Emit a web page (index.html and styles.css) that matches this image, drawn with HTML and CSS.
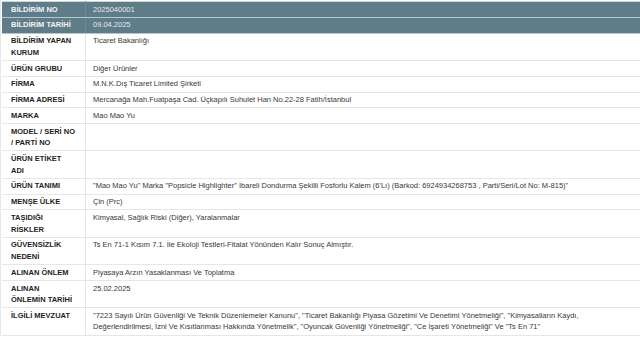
FILE: index.html
```html
<!DOCTYPE html>
<html lang="tr">
<head>
<meta charset="utf-8">
<title>Bildirim</title>
<link rel="stylesheet" href="styles.css">
</head>
<body>
<div class="frame">
<table class="info">
<tbody>
<tr class="head"><th>BİLDİRİM NO</th><td>2025040001</td></tr>
<tr class="head"><th>BİLDİRİM TARİHİ</th><td>09.04.2025</td></tr>
<tr><th>BİLDİRİM YAPAN KURUM</th><td>Ticaret Bakanlığı</td></tr>
<tr><th>ÜRÜN GRUBU</th><td>Diğer Ürünler</td></tr>
<tr><th>FİRMA</th><td>M.N.K.Dış Ticaret Limited Şirketi</td></tr>
<tr><th>FİRMA ADRESİ</th><td>Mercanağa Mah.Fuatpaşa Cad. Üçkapılı Suhulet Han No.22-28 Fatih/İstanbul</td></tr>
<tr><th>MARKA</th><td>Mao Mao Yu</td></tr>
<tr><th>MODEL / SERİ NO / PARTİ NO</th><td></td></tr>
<tr><th>ÜRÜN ETİKET ADI</th><td></td></tr>
<tr><th>ÜRÜN TANIMI</th><td>"Mao Mao Yu" Marka "Popsicle Highlighter" İbareli Dondurma Şekilli Fosforlu Kalem (6'Lı) (Barkod: 6924934268753 , Parti/Seri/Lot No: M-815)"</td></tr>
<tr><th>MENŞE ÜLKE</th><td>Çin (Prc)</td></tr>
<tr><th>TAŞIDIĞI RİSKLER</th><td>Kimyasal, Sağlık Riski (Diğer), Yaralanmalar</td></tr>
<tr><th>GÜVENSİZLİK NEDENİ</th><td>Ts En 71-1 Kısım 7.1. İle Ekoloji Testleri-Fitalat Yönünden Kalır Sonuç Almıştır.</td></tr>
<tr><th>ALINAN ÖNLEM</th><td>Piyasaya Arzın Yasaklanması Ve Toplatma</td></tr>
<tr><th>ALINAN ÖNLEMİN TARİHİ</th><td>25.02.2025</td></tr>
<tr><th>İLGİLİ MEVZUAT</th><td>"7223 Sayılı Ürün Güvenliği Ve Teknik Düzenlemeler Kanunu", "Ticaret Bakanlığı Piyasa Gözetimi Ve Denetimi Yönetmeliği", "Kimyasalların Kaydı, Değerlendirilmesi, İzni Ve Kısıtlanması Hakkında Yönetmelik", "Oyuncak Güvenliği Yönetmeliği", "Ce İşareti Yönetmeliği" Ve "Ts En 71"</td></tr>
</tbody>
</table>
</div>
</body>
</html>
```
FILE: styles.css
```css
html, body {
  margin: 0;
  padding: 0;
  background: #ffffff;
}
body {
  font-family: "Liberation Sans", Arial, sans-serif;
  font-size: 7.5px;
  color: #333333;
}
.frame {
  padding: 1px 0 0 1px;
  border-left: 1px solid #e4e6e7;
}
.info {
  width: 638px;
  border-collapse: collapse;
  table-layout: fixed;
  border-top: 1px solid #cdd6da;
}
.info th,
.info td {
  line-height: 11.6px;
  padding: 1.6px 8px 1.6px 8px;
  vertical-align: top;
  border-bottom: 1px solid #e6e6e6;
  text-align: left;
}
.info th {
  width: 64.5px;
  padding-left: 9px;
  padding-right: 9.5px;
  font-weight: bold;
  color: #1e1e1e;
  border-right: 1px solid #e6e6e6;
}
.info td {
  padding-left: 7px;
  color: #383838;
}
.info tr.head th,
.info tr.head td {
  background: #5f7c89;
  color: #f2f4f5;
  border-bottom: 1px solid #b9c7cd;
}
.info tr.head td {
  color: #e3e9ec;
}
.info tr.head th {
  border-right: 1px solid #6f8a96;
}
```
